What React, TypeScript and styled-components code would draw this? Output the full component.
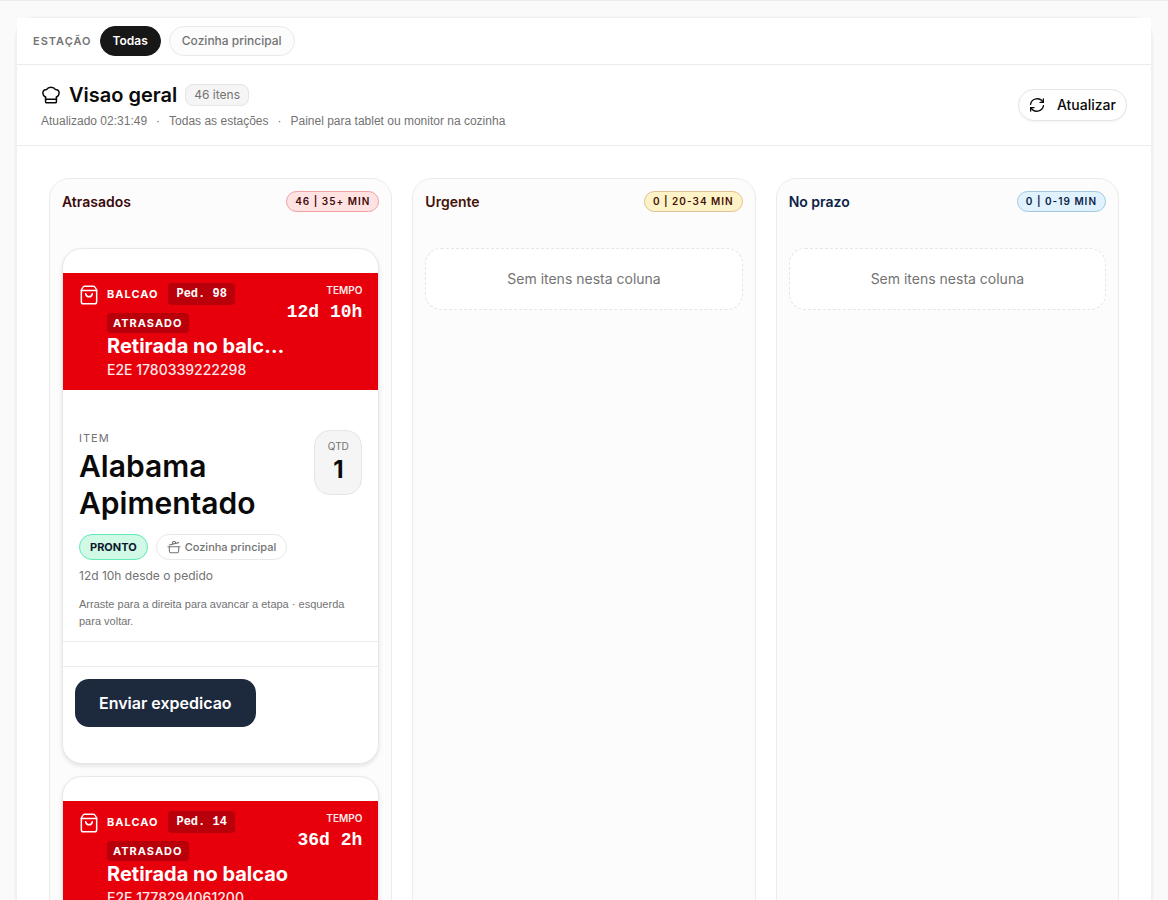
import React from "react";
import styled, { createGlobalStyle } from "styled-components";

const sans = `Inter, "Liberation Sans", sans-serif`;
const compact = `"Liberation Sans", Inter, sans-serif`;
const mono = `"Liberation Mono", "DejaVu Sans Mono", monospace`;

const Global = createGlobalStyle`
  *, *::before, *::after { box-sizing: border-box; }
  body { margin: 0; background: #fafafa; color: #0a0a0a; font-family: ${sans}; }
  h1, h2, h3, p, ul { margin: 0; padding: 0; }
  ul { list-style: none; }
  button { font-family: inherit; cursor: pointer; }
`;

const Shell = styled.div`
  min-height: 100vh;
  border-top: 1px solid #ececec;
  padding: 16px;
`;

const Board = styled.main`
  background: #fff;
  border: 1px solid #f0f0f0;
  border-radius: 20px;
  box-shadow: 0 1px 3px rgba(0, 0, 0, 0.1);
`;

const StationBar = styled.nav`
  display: flex;
  align-items: center;
  gap: 8px;
  padding: 8px 16px;
  background: #fff;
  border-bottom: 1px solid #ebebeb;
`;

const BarLabel = styled.span`
  font-size: 11px;
  line-height: 16px;
  font-weight: 600;
  letter-spacing: 1px;
  color: #737373;
`;

const StationButton = styled.button<{ $active?: boolean }>`
  height: 30px;
  padding: 0 12px;
  border-radius: 15px;
  border: 1px solid ${(p) => (p.$active ? "#171717" : "#e8e8e8")};
  background: ${(p) => (p.$active ? "#171717" : "#fcfcfc")};
  color: ${(p) => (p.$active ? "#fff" : "#737373")};
  font-size: 12px;
  line-height: 16px;
  font-weight: ${(p) => (p.$active ? 600 : 500)};
`;

const Header = styled.header`
  display: flex;
  align-items: center;
  justify-content: space-between;
  padding: 16px 24px;
  border-bottom: 1px solid #ebebeb;
`;

const TitleRow = styled.div`
  display: flex;
  align-items: center;
  gap: 8px;
  height: 28px;
`;

const Title = styled.h1`
  font-size: 20px;
  line-height: 28px;
  font-weight: 600;
`;

const CountBadge = styled.span`
  padding: 2px 8px;
  border: 1px solid #e5e5e5;
  border-radius: 8px;
  background: #f5f5f5;
  font-size: 12px;
  line-height: 16px;
  color: #737373;
`;

const Meta = styled.p`
  display: flex;
  gap: 9px;
  margin-top: 4px;
  font-family: ${compact};
  font-size: 12px;
  line-height: 16px;
  color: #737373;
`;

const RefreshButton = styled.button`
  display: flex;
  align-items: center;
  gap: 12px;
  height: 32px;
  padding: 0 10px;
  border: 1px solid #e5e5e5;
  border-radius: 16px;
  background: #fff;
  box-shadow: 0 1px 2px rgba(0, 0, 0, 0.05);
  font-size: 14px;
  line-height: 20px;
  font-weight: 500;
  color: #0a0a0a;
`;

const Columns = styled.div`
  display: grid;
  grid-template-columns: repeat(3, minmax(0, 1fr));
  gap: 20px;
  padding: 32px;
`;

const Column = styled.section`
  padding: 12px;
  border: 1px solid #ebebeb;
  border-radius: 20px;
  background: #fcfcfc;
`;

const ColumnHead = styled.div`
  display: flex;
  align-items: center;
  justify-content: space-between;
  margin-bottom: 36px;
`;

type Tone = "late" | "urgent" | "ok";
const tones: Record<Tone, { bg: string; line: string; ink: string }> = {
  late: { bg: "#ffe2e2", line: "#f1a1a3", ink: "#3d0a0a" },
  urgent: { bg: "#fef3c6", line: "#e3bf93", ink: "#451308" },
  ok: { bg: "#dff2fe", line: "#a3c8de", ink: "#0c2347" },
};

const ColumnTitle = styled.h2<{ $tone: Tone }>`
  font-size: 14px;
  line-height: 20px;
  font-weight: 600;
  color: ${(p) => tones[p.$tone].ink};
`;

const RangeBadge = styled.span<{ $tone: Tone }>`
  height: 21px;
  padding: 0 8px;
  border: 1px solid ${(p) => tones[p.$tone].line};
  border-radius: 11px;
  background: ${(p) => tones[p.$tone].bg};
  color: ${(p) => tones[p.$tone].ink};
  font-size: 10px;
  line-height: 19px;
  font-weight: 600;
  letter-spacing: 1px;
`;

const Empty = styled.p`
  padding: 20px;
  border: 1px dashed #e5e5e5;
  border-radius: 16px;
  background: #fff;
  text-align: center;
  font-size: 14px;
  line-height: 20px;
  color: #737373;
`;

const CardList = styled.ul`
  display: grid;
  gap: 12px;
`;

const Card = styled.li`
  padding: 24px 0;
  border: 1px solid #e8e8e8;
  border-radius: 20px;
  background: #fff;
  box-shadow: 0 2px 4px rgba(0, 0, 0, 0.1);
`;

const Ticket = styled.div`
  display: flex;
  padding: 10px 16px;
  background: #e7000b;
  color: #fff;
`;

const TicketIcon = styled.span`
  display: flex;
  height: 24px;
  margin-right: 8px;
  align-items: center;
`;

const TicketInfo = styled.div`
  flex: 1;
  min-width: 0;
`;

const Tags = styled.div`
  display: flex;
  flex-wrap: wrap;
  gap: 8px 10px;
  align-items: center;
`;

const Channel = styled.span`
  font-size: 11px;
  line-height: 16px;
  font-weight: 700;
  letter-spacing: 1px;
`;

const OrderTag = styled.span`
  padding: 0 8px;
  border-radius: 4px;
  background: #b9000a;
  font-family: ${mono};
  font-size: 12px;
  line-height: 22px;
  font-weight: 700;
  white-space: pre;
`;

const LateTag = styled.span`
  padding: 0 6px;
  border-radius: 4px;
  background: #b9000a;
  font-size: 11px;
  line-height: 20px;
  font-weight: 700;
  letter-spacing: 1px;
`;

const Customer = styled.h3`
  overflow: hidden;
  text-overflow: ellipsis;
  white-space: nowrap;
  font-size: 20px;
  line-height: 27px;
  font-weight: 700;
`;

const Reference = styled.p`
  font-size: 14px;
  line-height: 20px;
  font-weight: 500;
  color: #ffe9ea;
`;

const Timer = styled.div`
  display: flex;
  flex-direction: column;
  align-items: flex-end;
`;

const TimerLabel = styled.span`
  font-size: 10px;
  line-height: 15px;
  font-weight: 600;
  color: #ffe9ea;
`;

const TimerValue = styled.span`
  font-family: ${mono};
  font-size: 18px;
  line-height: 28px;
  font-weight: 700;
`;

const Body = styled.div`
  display: flex;
  flex-direction: column;
  margin-top: 24px;
  padding: 16px 16px 11px;
  border-bottom: 1px solid #ebebeb;
`;

const ItemRow = styled.div`
  display: flex;
  align-items: flex-start;
  justify-content: space-between;
  gap: 12px;
`;

const ItemLabel = styled.p`
  font-size: 11px;
  line-height: 16px;
  letter-spacing: 1px;
  color: #737373;
`;

const ItemName = styled.p`
  margin-top: 2px;
  font-size: 30px;
  line-height: 37px;
  font-weight: 600;
`;

const Quantity = styled.div`
  display: flex;
  flex: none;
  flex-direction: column;
  align-items: center;
  width: 48px;
  height: 65px;
  padding: 8px 0;
  border: 1px solid #e5e5e5;
  border-radius: 16px;
  background: #f5f5f5;
`;

const QuantityLabel = styled.span`
  font-size: 10px;
  line-height: 15px;
  color: #737373;
`;

const QuantityValue = styled.span`
  font-size: 24px;
  line-height: 32px;
  font-weight: 700;
`;

const Chips = styled.div`
  display: flex;
  gap: 8px;
  margin-top: 12px;
`;

const Chip = styled.span<{ $ready?: boolean }>`
  display: flex;
  align-items: center;
  gap: 4px;
  height: 26px;
  padding: 0 10px;
  border: 1px solid ${(p) => (p.$ready ? "#5ee9b5" : "#e8e8e8")};
  border-radius: 13px;
  background: ${(p) => (p.$ready ? "#d0fae5" : "#fff")};
  color: ${(p) => (p.$ready ? "#0f172b" : "#737373")};
  font-size: 11px;
  font-weight: ${(p) => (p.$ready ? 700 : 500)};
`;

const Elapsed = styled.p`
  margin-top: 8px;
  font-size: 12px;
  line-height: 16px;
  color: #737373;
`;

const Hint = styled.p`
  margin-top: 12px;
  font-family: ${compact};
  font-size: 11px;
  line-height: 17px;
  color: #737373;
`;

const Actions = styled.div`
  margin-top: 24px;
  padding: 12px;
  border-top: 1px solid #ebebeb;
`;

const SendButton = styled.button`
  display: block;
  height: 48px;
  padding: 0 24px;
  border: 0;
  border-radius: 14px;
  background: #1d293d;
  color: #fff;
  font-size: 16px;
  font-weight: 600;
`;

const iconProps = {
  viewBox: "0 0 24 24",
  fill: "none",
  stroke: "currentColor",
  strokeLinecap: "round",
  strokeLinejoin: "round",
  "aria-hidden": true,
} as const;

const ChefHatIcon = () => (
  <svg {...iconProps} width="20" height="20" strokeWidth="1.8">
    <path d="M5.500 14.500V20c0 .8.500 1.300 1.300 1.300h10.400c.8 0 1.300-.5 1.300-1.300v-5.500" />
    <path d="M5.500 14.500C3.500 13.300 2.200 11.600 2.200 9.500C2.200 7 4.200 5.200 6.800 5.300C7.800 3.600 9.700 2.700 12 2.700s4.200.9 5.200 2.600c2.600-.1 4.600 1.700 4.600 4.200c0 2.100-1.300 3.800-3.300 5" />
    <path d="M5.500 17h13" />
  </svg>
);

const RefreshIcon = () => (
  <svg {...iconProps} width="16" height="16" strokeWidth="2">
    <path d="M21.500 3v5h-5" />
    <path d="M21 8A10 10 0 0 0 2.300 11" />
    <path d="M2.500 21v-5h5" />
    <path d="M3 16A10 10 0 0 0 21.700 13" />
  </svg>
);

const BagIcon = () => (
  <svg {...iconProps} width="20" height="20" strokeWidth="1.800">
    <path d="M2.800 6l1.700-3C5 2 5.800 1.500 6.800 1.500h10.400c1 0 1.800.5 2.300 1.500l1.700 3v14c0 1.700-.8 2.500-2.500 2.500H5.300c-1.700 0-2.500-.8-2.500-2.500z" />
    <path d="M2.800 6.500h18.400" />
    <path d="M8 10.500c.4 2.200 1.900 3.600 4 3.600s3.600-1.400 4-3.600" />
  </svg>
);

const PotIcon = () => (
  <svg {...iconProps} width="14" height="14" strokeWidth="1.800">
    <path d="M4 12v7c0 2 1 3 3 3h10c2 0 3-1 3-3v-7" />
    <path d="M1.500 11.500h21" />
    <path d="M4 8.500L20 4.500" />
    <path d="M9.500 7l-.3-2c-.1-1 .3-1.600 1.300-1.900l2-.5c1-.2 1.600.2 1.800 1.100l.4 2" />
  </svg>
);

type Order = { id: string; time: string; ref: string; name: string; item: string };

const orders: Order[] = [
  { id: "98", time: "12d 10h", ref: "1780339222298", name: "Retirada no balcao", item: "Alabama Apimentado" },
  { id: "14", time: "36d 2h", ref: "1778294061200", name: "Retirada no balcao", item: "Alabama Apimentado" },
];

const OrderCard = ({ order }: { order: Order }) => (
  <Card>
    <Ticket>
      <TicketIcon><BagIcon /></TicketIcon>
      <TicketInfo>
        <Tags>
          <Channel>BALCAO</Channel>
          <OrderTag>Ped. {order.id}</OrderTag>
          <LateTag>ATRASADO</LateTag>
        </Tags>
        <Customer>{order.name}</Customer>
        <Reference>E2E {order.ref}</Reference>
      </TicketInfo>
      <Timer>
        <TimerLabel>TEMPO</TimerLabel>
        <TimerValue>{order.time}</TimerValue>
      </Timer>
    </Ticket>
    <Body>
      <ItemRow>
        <div>
          <ItemLabel>ITEM</ItemLabel>
          <ItemName>{order.item}</ItemName>
        </div>
        <Quantity>
          <QuantityLabel>QTD</QuantityLabel>
          <QuantityValue>1</QuantityValue>
        </Quantity>
      </ItemRow>
      <Chips>
        <Chip $ready>PRONTO</Chip>
        <Chip><PotIcon />Cozinha principal</Chip>
      </Chips>
      <Elapsed>{order.time} desde o pedido</Elapsed>
      <Hint>Arraste para a direita para avancar a etapa · esquerda para voltar.</Hint>
    </Body>
    <Actions>
      <SendButton type="button">Enviar expedicao</SendButton>
    </Actions>
  </Card>
);

export default function App() {
  return (
    <>
      <Global />
      <Shell>
        <Board>
          <StationBar aria-label="Estação">
            <BarLabel>ESTAÇÃO</BarLabel>
            <StationButton type="button" $active>Todas</StationButton>
            <StationButton type="button">Cozinha principal</StationButton>
          </StationBar>
          <Header>
            <div>
              <TitleRow>
                <ChefHatIcon />
                <Title>Visao geral</Title>
                <CountBadge>46 itens</CountBadge>
              </TitleRow>
              <Meta>
                <span>Atualizado 02:31:49</span>
                <span>·</span>
                <span>Todas as estações</span>
                <span>·</span>
                <span>Painel para tablet ou monitor na cozinha</span>
              </Meta>
            </div>
            <RefreshButton type="button"><RefreshIcon />Atualizar</RefreshButton>
          </Header>
          <Columns>
            <Column>
              <ColumnHead>
                <ColumnTitle $tone="late">Atrasados</ColumnTitle>
                <RangeBadge $tone="late">46 | 35+ MIN</RangeBadge>
              </ColumnHead>
              <CardList>
                {orders.map((o) => <OrderCard key={o.id} order={o} />)}
              </CardList>
            </Column>
            <Column>
              <ColumnHead>
                <ColumnTitle $tone="urgent">Urgente</ColumnTitle>
                <RangeBadge $tone="urgent">0 | 20-34 MIN</RangeBadge>
              </ColumnHead>
              <Empty>Sem itens nesta coluna</Empty>
            </Column>
            <Column>
              <ColumnHead>
                <ColumnTitle $tone="ok">No prazo</ColumnTitle>
                <RangeBadge $tone="ok">0 | 0-19 MIN</RangeBadge>
              </ColumnHead>
              <Empty>Sem itens nesta coluna</Empty>
            </Column>
          </Columns>
        </Board>
      </Shell>
    </>
  );
}
